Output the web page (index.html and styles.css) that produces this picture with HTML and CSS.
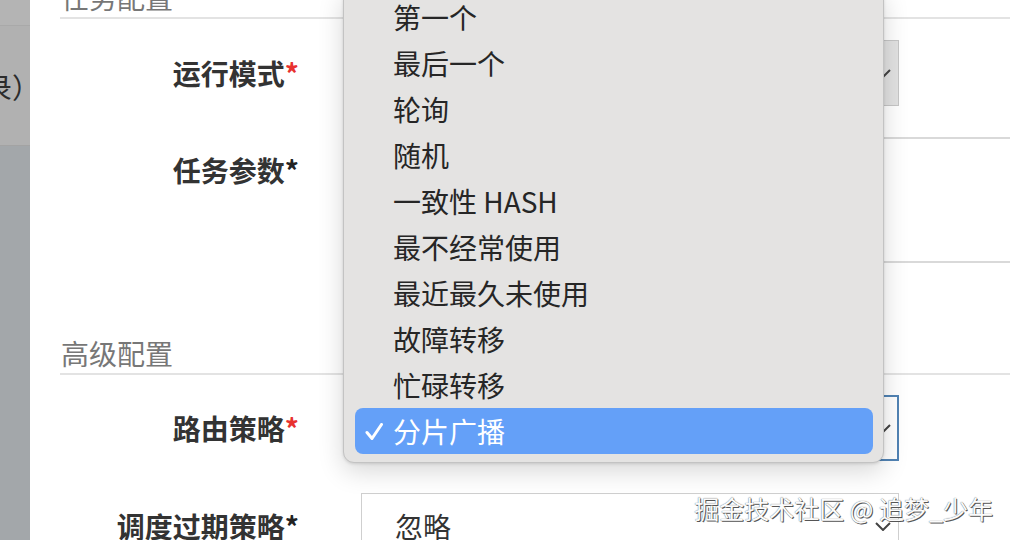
FILE: index.html
```html
<!DOCTYPE html>
<html lang="zh-CN">
<head>
<meta charset="utf-8">
<title>任务配置</title>
<link rel="stylesheet" href="styles.css">
</head>
<body>
  <div class="backdrop">
    <div class="bd-top"></div>
    <div class="bd-row"><span class="bd-text">（录）</span></div>
    <div class="bd-rest"></div>
  </div>

  <div class="modal">
    <div class="form">
      <div class="section-title">任务配置</div>
      <div class="rows rows-first">
        <div class="row">
          <div class="label">运行模式<span class="req red">*</span></div>
          <div class="select disabled"><span class="sel-text"></span><svg class="chev" viewBox="0 0 16 9"><path d="M1 1 L8 8 L15 1"/></svg></div>
        </div>
        <div class="row">
          <div class="label">任务参数<span class="req">*</span></div>
          <div class="textarea"></div>
        </div>
      </div>

      <div class="section-title advanced">高级配置</div>
      <div class="rows rows-second">
        <div class="row">
          <div class="label">路由策略<span class="req red">*</span></div>
          <div class="select focused"><span class="sel-text"></span><svg class="chev" viewBox="0 0 16 9"><path d="M1 1 L8 8 L15 1"/></svg></div>
        </div>
        <div class="row">
          <div class="label">调度过期策略<span class="req">*</span></div>
          <div class="select"><span class="sel-text">忽略</span><svg class="chev" viewBox="0 0 16 9"><path d="M1 1 L8 8 L15 1"/></svg></div>
        </div>
      </div>
    </div>
  </div>

  <ul class="menu">
    <li class="item">第一个</li>
    <li class="item">最后一个</li>
    <li class="item">轮询</li>
    <li class="item">随机</li>
    <li class="item">一致性 HASH</li>
    <li class="item">最不经常使用</li>
    <li class="item">最近最久未使用</li>
    <li class="item">故障转移</li>
    <li class="item">忙碌转移</li>
    <li class="item selected"><svg class="check" viewBox="0 0 18 18"><path d="M2 9.5 L7 15.5 L16.5 1.5"/></svg>分片广播</li>
  </ul>

  <div class="watermark">掘金技术社区 @ 追梦_少年</div>
</body>
</html>
```

FILE: styles.css
```css
* { box-sizing: border-box; }

html, body {
  margin: 0;
  padding: 0;
  width: 1010px;
  height: 540px;
  overflow: hidden;
}

body {
  display: flex;
  position: relative;
  font-family: "Noto Sans CJK SC", "Noto Sans", sans-serif;
  color: #333;
  background: #fff;
}

/* left dimmed page behind the modal */
.backdrop {
  width: 30px;
  flex: none;
  display: flex;
  flex-direction: column;
  overflow: hidden;
}
.bd-top {
  height: 26px;
  background: #b4b4b4;
  border-bottom: 1px solid #a9a9a9;
}
.bd-row {
  height: 120px;
  background: #b1b1b1;
  border-bottom: 1px solid #a3a3a3;
  display: flex;
  align-items: center;
  justify-content: flex-end;
  padding-top: 2px;
  overflow: hidden;
}
.bd-text {
  font-size: 28px;
  line-height: 36px;
  color: #2c2c2c;
  white-space: nowrap;
  margin-right: -10px;
}
.bd-rest {
  flex: 1;
  background: #a3a7aa;
}

/* modal */
.modal {
  flex: 1;
  min-width: 0;
  background: #fff;
  overflow: hidden;
}
.form {
  margin-top: -19px;
  padding-left: 30px;
}
.section-title {
  font-size: 28px;
  line-height: 32px;
  padding-bottom: 4px;
  color: #777;
  padding-left: 1px;
  border-bottom: 2px solid #e3e3e3;
}
.section-title.advanced {
  margin-top: 74px;
}

.rows {
  display: flex;
  flex-direction: column;
}
.rows-first {
  margin-top: 21px;
  gap: 31px;
}
.rows-second {
  margin-top: 20px;
  gap: 32px;
}

.row {
  display: grid;
  grid-template-columns: 239px 1fr;
  column-gap: 62px;
  align-items: start;
}
.label {
  text-align: right;
  font-size: 28px;
  line-height: 66px;
  font-weight: 700;
  color: #333;
  white-space: nowrap;
}
.req { color: #222; }
.req.red { color: #e8312f; }

.select {
  width: 538px;
  height: 66px;
  border: 1px solid #cfcfcf;
  background: #fff;
  display: flex;
  align-items: center;
  padding-left: 33px;
  padding-right: 7px;
  font-size: 28px;
  color: #333;
}
.select.disabled {
  background: #e2e2e2;
  border-color: #c6c6c6;
}
.select.focused {
  border: 2px solid #5183b4;
  padding-left: 32px;
  padding-right: 6px;
}
.sel-text { flex: 1; }
.chev {
  width: 16px;
  height: 9px;
  fill: none;
  stroke: #444;
  stroke-width: 2;
}

.textarea {
  height: 126px;
  border: 2px solid #d9d9d9;
  border-right: none;
  margin-right: -40px;
}

/* open native-like dropdown menu */
.menu {
  position: absolute;
  left: 343px;
  top: -12px;
  width: 541px;
  height: 475px;
  margin: 0;
  padding: 5px 10px 8px 11px;
  list-style: none;
  background: #e4e3e2;
  border: 1px solid #c3c3c3;
  border-radius: 11px;
  box-shadow: 0 8px 26px rgba(0, 0, 0, 0.16), 0 1px 3px rgba(0, 0, 0, 0.12);
}
.item {
  position: relative;
  height: 46px;
  line-height: 46px;
  padding-left: 38px;
  font-size: 28px;
  color: #262626;
  border-radius: 8px;
  white-space: nowrap;
}
.item.selected {
  background: #64a0f8;
  color: #fff;
}
.check {
  position: absolute;
  left: 10px;
  top: 15px;
  width: 18px;
  height: 18px;
  fill: none;
  stroke: #fff;
  stroke-width: 3;
  stroke-linecap: round;
  stroke-linejoin: round;
}

.watermark {
  position: absolute;
  right: 17px;
  bottom: 17px;
  font-size: 25px;
  line-height: 30px;
  color: #fbfbfb;
  white-space: nowrap;
  text-shadow: 1px 1px 0 #555, 0 0 1px #444;
}
```
